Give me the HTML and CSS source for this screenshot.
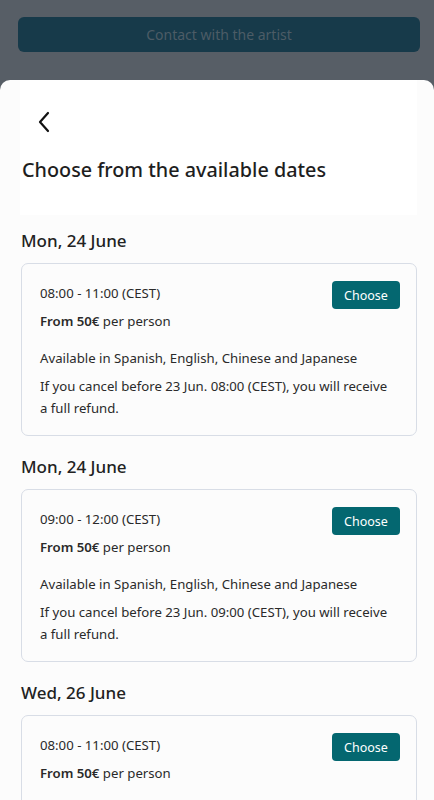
FILE: index.html
```html
<!DOCTYPE html>
<html lang="en">
<head>
<meta charset="utf-8">
<title>Choose a date</title>
<link rel="stylesheet" href="styles.css">
</head>
<body>
<div class="backdrop">
  <button class="contact">Contact with the artist</button>
</div>
<div class="sheet">
  <div class="sheet-header">
    <button class="back" aria-label="Back">
      <svg width="14" height="22" viewBox="0 0 14 22"><path d="M11 2 L3 11 L11 20" fill="none" stroke="#111" stroke-width="2.2" stroke-linecap="round" stroke-linejoin="round"/></svg>
    </button>
    <h1 class="title">Choose from the available dates</h1>
  </div>
  <div class="dates">
    <section class="day">
      <h2 class="day-title">Mon, 24 June</h2>
      <div class="slot">
        <div class="slot-top">
          <div>
            <p class="time">08:00 - 11:00 (CEST)</p>
            <p class="price"><strong>From 50€</strong> per person</p>
          </div>
          <button class="choose">Choose</button>
        </div>
        <p class="info">Available in Spanish, English, Chinese and Japanese</p>
        <p class="info">If you cancel before 23 Jun. 08:00 (CEST), you will receive a full refund.</p>
      </div>
    </section>
    <section class="day">
      <h2 class="day-title">Mon, 24 June</h2>
      <div class="slot">
        <div class="slot-top">
          <div>
            <p class="time">09:00 - 12:00 (CEST)</p>
            <p class="price"><strong>From 50€</strong> per person</p>
          </div>
          <button class="choose">Choose</button>
        </div>
        <p class="info">Available in Spanish, English, Chinese and Japanese</p>
        <p class="info">If you cancel before 23 Jun. 09:00 (CEST), you will receive a full refund.</p>
      </div>
    </section>
    <section class="day">
      <h2 class="day-title">Wed, 26 June</h2>
      <div class="slot">
        <div class="slot-top">
          <div>
            <p class="time">08:00 - 11:00 (CEST)</p>
            <p class="price"><strong>From 50€</strong> per person</p>
          </div>
          <button class="choose">Choose</button>
        </div>
        <p class="info">Available in Spanish, English, Chinese and Japanese</p>
        <p class="info">If you cancel before 25 Jun. 08:00 (CEST), you will receive a full refund.</p>
      </div>
    </section>
  </div>
</div>
</body>
</html>
```

FILE: styles.css
```css
* { box-sizing: border-box; }
html, body {
  margin: 0;
  padding: 0;
  background: #575e66;
  font-family: "Noto Sans", "Open Sans", sans-serif;
  color: #222;
}
.backdrop {
  padding: 17px 14px 28px 18px;
}
.contact {
  display: block;
  width: 100%;
  height: 35px;
  border: none;
  border-radius: 6px;
  background: #173a4a;
  color: #4c5c66;
  font-family: inherit;
  font-size: 14px;
}
.sheet {
  background: #fcfcfc;
  border-radius: 10px 10px 0 0;
}
.sheet-header {
  background: #fff;
  margin: 0 17px 0 20px;
  padding: 31px 0 31px 2px;
}
.back {
  display: block;
  border: none;
  background: none;
  padding: 0;
  margin: 0 0 23px 15px;
  width: 14px;
  height: 22px;
}
.back svg { display: block; }
.title {
  margin: 0;
  font-size: 19.8px;
  font-weight: 500;
  line-height: 28px;
  color: #1e1e1e;
}
.dates {
  padding: 14px 17px 0 21px;
}
.day-title {
  margin: 0 0 10px;
  font-size: 17px;
  font-weight: 500;
  line-height: 24px;
  color: #222;
}
.day { margin-bottom: 19px; }
.slot {
  border: 1px solid #d8dde6;
  border-radius: 7px;
  background: #fcfcfc;
  padding: 17px 17px 16px 18px;
}
.slot-top {
  display: flex;
  justify-content: space-between;
  align-items: flex-start;
  margin-bottom: 15px;
}
.time, .price, .info {
  margin: 0;
  font-size: 13.2px;
  line-height: 22px;
  color: #2a2a2a;
}
.info { padding-right: 8px; }
.time { margin-top: 1px; margin-bottom: 6px; }
.price strong { font-weight: 600; }
.info + .info { margin-top: 6px; }
.choose {
  border: none;
  border-radius: 4px;
  background: #046770;
  color: #fff;
  font-family: inherit;
  font-size: 12.5px;
  height: 28px;
  width: 68px;
  padding: 0;
  margin-right: -1px;
}
```
